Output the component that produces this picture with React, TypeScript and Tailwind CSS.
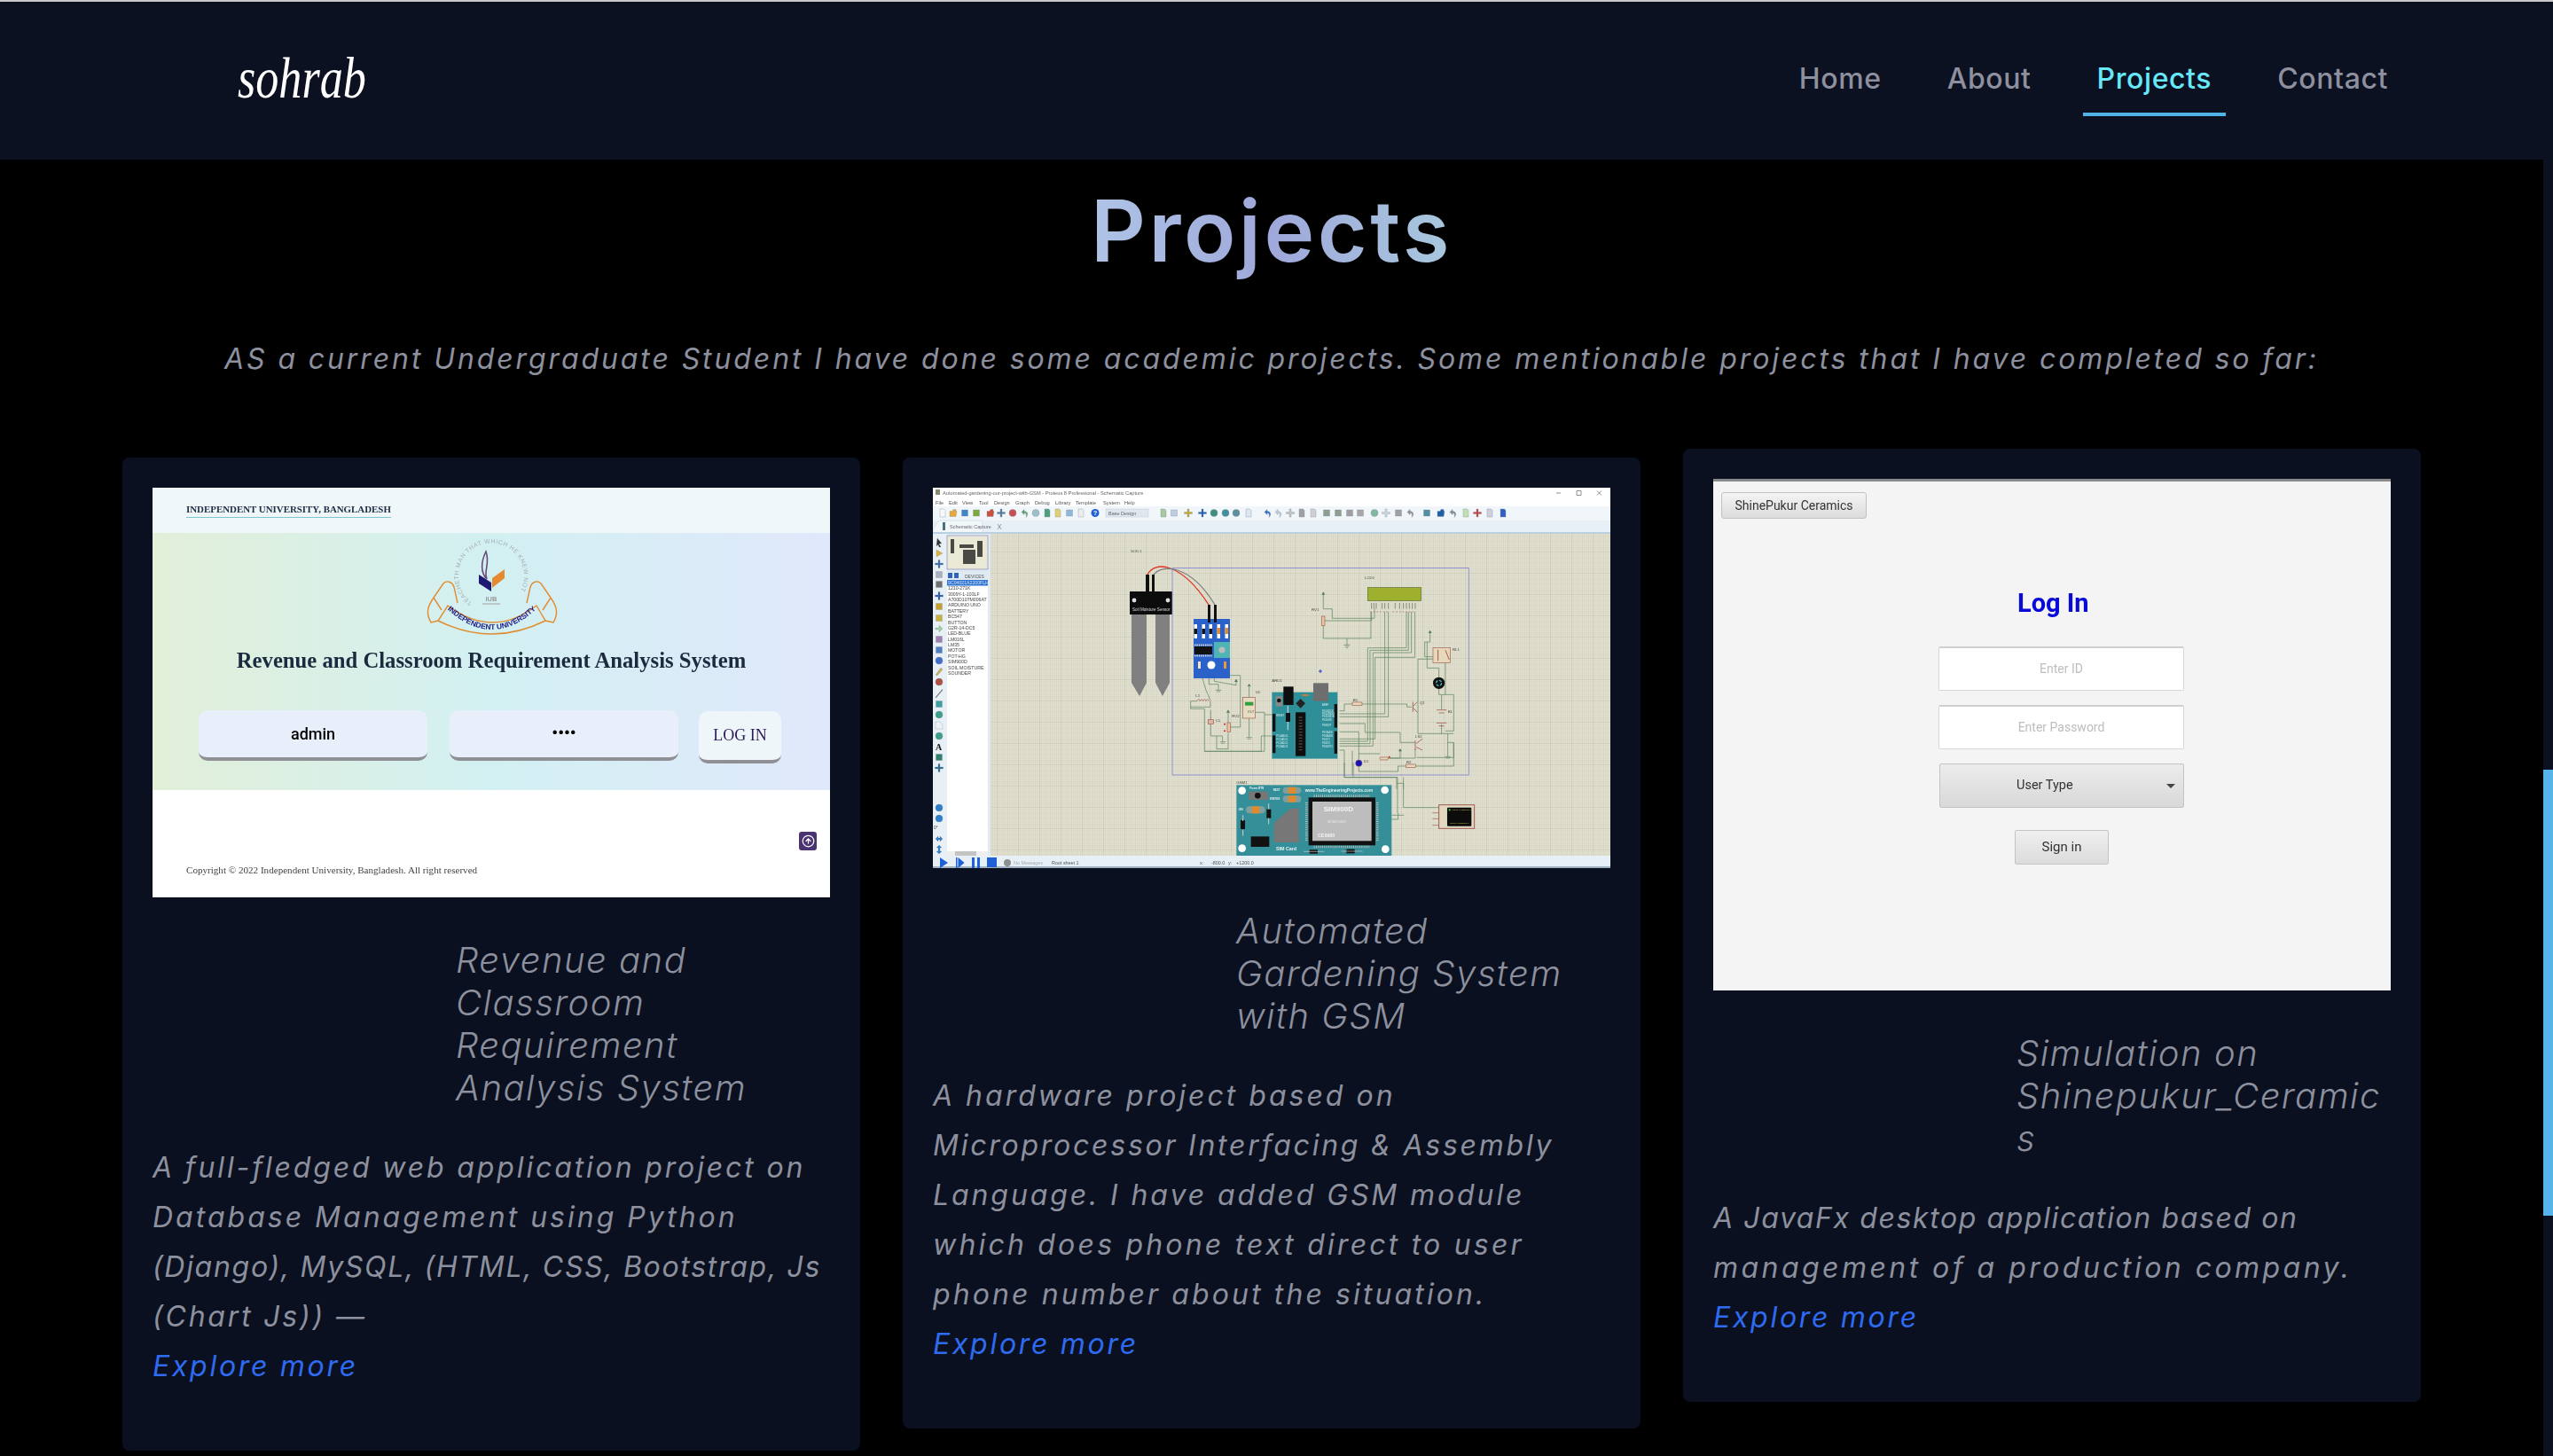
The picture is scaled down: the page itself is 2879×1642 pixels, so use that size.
import { CircleArrowUp } from "lucide-react";

const navItems = ["Home", "About", "Projects", "Contact"];

const wires = [
  "M577 240V290H607V322H750V290",
  "M582 330H740V300",
  "M577 347V390H738V300",
  "M657 390V412",
  "M785 300V645H632",
  "M797 300V655H632",
  "M858 300V422H727V738H632",
  "M865 300V430H735V746H632",
  "M875 300V438H745V754H632",
  "M887 300V454H752V730H632",
  "M938 372V402H920V452H948",
  "M928 402V490H968V522",
  "M897 460H948M897 460V712H1018",
  "M990 470V580",
  "M968 560V580H1018V703H990",
  "M632 635H648V612H678",
  "M704 612H860V622H876",
  "M977 580V630M977 680V712",
  "M632 678H718V708H837V742H888",
  "M888 765V795H775",
  "M998 712V790",
  "M893 793H1018V742H998",
  "M697 780H768M800 795H837V770",
  "M697 825V840H830V822H855",
  "M890 822H1018V742",
  "M632 706H697V800",
  "M632 768H648V860H825V900",
  "M675 770V852M848 860V900",
  "M326 555V590M326 660V725",
  "M347 640H378V772H175V628H128V602H150",
  "M195 602V622H128",
  "M196 632V665M196 680V720H236V740",
  "M216 720V764H255V710",
  "M175 772H367V720H405",
  "M378 648H405",
  "M255 640V675M262 690H296V515H262",
  "M168 525L180 565L195 600",
  "M190 525V545H222V565",
  "M208 525V535L282 548V530",
];

const labels: [string, number, number][] = [
  ["LCD1", 717, 188],
  ["RV1", 537, 296],
  ["RL1", 1014, 432],
  ["ARD1", 403, 538],
  ["Q1", 903, 612],
  ["B1", 998, 642],
  ["LS1", 888, 727],
  ["D1", 714, 810],
  ["R2", 858, 814],
  ["R1", 677, 602],
  ["U1", 347, 577],
  ["RV2", 268, 658],
  ["C1", 212, 673],
  ["L1", 145, 587],
  ["GSM1", 283, 881],
];

const deviceList = [
  "9C04021A2200FLH",
  "1210-271K",
  "3009Y-1-103LF",
  "A700D107M006AT",
  "ARDUINO UNO",
  "BATTERY",
  "BC547",
  "BUTTON",
  "G2R-14-DC5",
  "LED-BLUE",
  "LM016L",
  "LM35",
  "MOTOR",
  "POT-HG",
  "SIM900D",
  "SOIL MOISTURE",
  "SOUNDER",
];

const menuItems: [string, number][] = [
  ["File", 3],
  ["Edit", 18],
  ["View", 33],
  ["Tool", 52],
  ["Design", 69],
  ["Graph", 93],
  ["Debug", 115],
  ["Library", 138],
  ["Template", 161],
  ["System", 192],
  ["Help", 216],
];

// toolbar icons: x, colour, path around the icon centre
const doc = "M-3 -4.5H1.5L3 -3V4.5H-3Z";
const box = "M-3.5 -3.5H3.5V3.5H-3.5Z";
const plus = "M-1 -4.5H1V-1H4.5V1H1V4.5H-1V1H-4.5V-1H-1Z";
const disc = "M0 -4A4 4 0 1 1 0 4A4 4 0 1 1 0 -4Z";
const folder = "M-4 -2H-1L0 -4H3V-2H4L3 4H-4Z";
const undo = "M-3 -1L0 -4V-2C4 -2 5 2 2 5C3 2 2 0 0 0V2Z";
const toolIcons: [number, string, string][] = [
  [11, "#f8f8f8", doc], [23, "#e8a838", folder], [36, "#3f86c8", box], [49, "#7da83c", box],
  [65, "#c8503c", folder], [77, "#4f7f9f", plus], [90, "#c85050", disc], [103, "#5f9f6f", undo],
  [116, "#9fc0c8", disc], [129, "#4f9f7f", doc], [141, "#e0d070", doc], [154, "#8fb8dc", box],
  [167, "#ececec", doc], [260, "#a8c8a0", doc], [272, "#c0cce0", box],
  [288, "#c8a830", plus], [304, "#1f5fb8", plus], [317, "#3f8f7f", disc], [330, "#3f8f9f", disc],
  [342, "#5f8f9f", disc], [356, "#dce6f0", doc], [377, "#2f6fc8", undo], [389, "#c0ccd4", undo],
  [403, "#c4c4c4", plus], [416, "#a0a0a0", doc], [429, "#d0d0d0", doc], [444, "#8f9f8f", box],
  [457, "#8f9f8f", box], [470, "#9f9f9f", box], [482, "#a8a8a8", box], [498, "#7fb89f", disc],
  [511, "#d0d8e0", plus], [525, "#a0a0a0", box], [538, "#909090", undo], [557, "#4f8fa0", box],
  [573, "#1f5fa8", folder], [586, "#808890", undo], [601, "#bfe0af", doc], [614, "#c84040", plus],
  [628, "#d0d0d8", doc], [643, "#3060c0", doc],
];

const sideIcons: [number, string, string][] = [
  [62, "#303030", "M-2 -5L3 1H0L2 5H0L-1 2L-3 4Z"],
  [74, "#d8b040", "M-3 -4L4 0L-3 4Z"],
  [86, "#3f6fa8", plus],
  [98, "#a8b0c0", box],
  [109, "#707070", box],
  [122, "#2f5fb8", plus],
  [134, "#c8a030", box],
  [147, "#c8b040", box],
  [159, "#9fd09f", "M-4 -1H0V-4L4 0L0 4V1H-4Z"],
  [171, "#9f7fb0", box],
  [183, "#4f7fc0", box],
  [195, "#3f6fc8", disc],
  [207, "#c8b060", "M-4 4L2 -4L4 -2L-2 5Z"],
  [219, "#b05040", disc],
  [232, "#404040", "M-4 4.5L3.5 -4.5L4 -4L-3.5 5Z"],
  [244, "#3f9f9f", box],
  [256, "#3f9f8f", disc],
  [268, "#eef2f4", "M-4 -4H1C4 -2 4 2 4 4H-4Z"],
  [280, "#3f9f8f", disc],
  [304, "#2f7f6f", box],
  [316, "#2f6f8f", plus],
  [361, "#2f7fc8", disc],
  [373, "#2f7fc8", disc],
  [396, "#2f7fc8", "M-4 0L-1 -3V-1H1V-3L4 0L1 3V1H-1V3Z"],
  [408, "#2f7fc8", "M0 -5L3 -2H1V2H3L0 5L-3 2H-1V-2H-3Z"],
];

function IndependentLogo() {
  return (
    <svg viewBox="0 0 150 112" className="w-[150px] h-[112px]">
      <defs>
        <path id="iub-ring" d="M52.4 73.7A37 37 0 1 1 95.6 73.7" fill="none" />
        <path id="iub-band" d="M17 74Q75 134 132 74" fill="none" />
      </defs>
      <text fontFamily="Liberation Sans" fontSize="6.8" fill="#a9adb3" letterSpacing="0.6">
        <textPath href="#iub-ring">TEACHETH MAN THAT WHICH HE KNEW NOT</textPath>
      </text>
      <path d="M68 16C62 28 62 40 69 47C65 38 73 30 68 16Z" fill="none" stroke="#6b4a78" strokeWidth="1.6" />
      <path d="M60 42L74 51V61L60 52Z" fill="#1c1a72" />
      <path d="M89 36L75 46V57L89 46Z" fill="#e48b32" />
      <text x="74" y="72" textAnchor="middle" fontFamily="Liberation Sans" fontWeight="700" fontSize="7.5" fill="#999">
        IUB
      </text>
      <path d="M64 75H84" stroke="#aaa" strokeWidth="1.2" />
      <g fill="none" stroke="#e08c30" strokeWidth="1.4">
        <path d="M25 77Q75 115 125 77L135 94Q75 124 14 94Z" />
        <path d="M9 68L20 52C24 48 30 50 32 56L36 74M14 94L6 96C0 86 2 78 9 68L18 82" />
        <path d="M141 68L130 52C126 48 120 50 118 56L114 74M135 94L144 96C150 86 148 78 141 68L132 82" />
      </g>
      <text fontFamily="Liberation Sans" fontSize="8.4" fontWeight="700" fill="#1c1a8a">
        <textPath href="#iub-band" startOffset="50%" textAnchor="middle">
          INDEPENDENT UNIVERSITY
        </textPath>
      </text>
    </svg>
  );
}

function IubLogin() {
  return (
    <div className="h-[462px] bg-white flex flex-col font-['Liberation_Serif',serif] blur-[0.3px]">
      <div className="h-[51px] bg-[#eff7f9] pl-[38px] pt-[17px]">
        <div className="w-fit border-b-[1.5px] border-[#7cc7cf] pb-[2px] text-[10.9px] leading-[14px] font-bold text-[#1d2b45]">
          INDEPENDENT UNIVERSITY, BANGLADESH
        </div>
      </div>
      <div className="h-[290px] bg-linear-to-r from-[#e2efd9] via-[#d2f0f2] to-[#e0e8fb] flex flex-col items-center">
        <div className="mt-[5px] ml-[1px] h-[112px]">
          <IndependentLogo />
        </div>
        <div className="mt-[12px] text-[24.7px] leading-[30px] font-bold text-[#1b2a3e]">
          Revenue and Classroom Requirement Analysis System
        </div>
        <div className="mt-[41px] self-start ml-[52px] flex items-start">
          <div className="w-[258px] h-[57px] rounded-[10px] bg-[#e8effb] border-b-4 border-[#8f8f96] flex items-center justify-center font-['Roboto',sans-serif] font-medium text-[18px] text-black">
            admin
          </div>
          <div className="ml-[25px] w-[258px] h-[57px] rounded-[10px] bg-[#e8effb] border-b-4 border-[#8f8f96] flex items-center justify-center font-['Roboto',sans-serif] font-bold text-[19px] text-black">
            ••••
          </div>
          <div className="ml-[23px] mt-px w-[93px] h-[59px] rounded-[10px] bg-[#eff6fa] border-b-4 border-[#8f8f96] flex items-center justify-center text-[18px] text-[#2a1a5a]">
            LOG IN
          </div>
        </div>
      </div>
      <div className="flex justify-end pt-[47px] pr-[15px]">
        <div className="w-5 h-[21px] rounded-[3px] bg-[#4a3470] flex items-center justify-center">
          <CircleArrowUp size={15} className="text-white" />
        </div>
      </div>
      <div className="mt-[15px] pl-[38px] text-[11.1px] leading-[14px] text-[#444]">
        Copyright © 2022 Independent University, Bangladesh. All right reserved
      </div>
    </div>
  );
}

function ProteusCapture() {
  return (
    <svg viewBox="0 0 764 429" className="block w-[764px] h-[429px] blur-[0.35px]" fontFamily="Liberation Sans">
      <defs>
        <pattern id="sheet-grid" width="2.4" height="2.4" patternUnits="userSpaceOnUse">
          <rect width="2.4" height="2.4" fill="#e3e2d2" />
          <path d="M0 0H2.4M0 0V2.4" stroke="#c4c4ae" strokeWidth="0.5" />
        </pattern>
        <pattern id="sheet-major" width="24" height="24" patternUnits="userSpaceOnUse">
          <path d="M0 0H24M0 0V24" stroke="#b9b9a4" strokeWidth="0.5" />
        </pattern>
        <clipPath id="device-clip">
          <rect x="16" y="104" width="46" height="312" />
        </clipPath>
      </defs>
      <rect width="764" height="429" fill="#fff" />
      <text x="11" y="8" fontSize="5.7" fill="#666">
        Automated-gardening-our-project-with-GSM - Proteus 8 Professional - Schematic Capture
      </text>
      <path d="M3 2h5v6H3z" fill="#8a8a70" />
      <path d="M703 6H708M726 3.5h5v5h-5zM749 3.5l5 5M754 3.5l-5 5" stroke="#777" strokeWidth="0.8" fill="none" />
      {menuItems.map(([name, x]) => (
        <text key={name} x={x} y="19" fontSize="5.7" fill="#555">
          {name}
        </text>
      ))}
      <rect y="21" width="764" height="16" fill="#f0f6fa" />
      {toolIcons.map(([x, color, d]) => (
        <path key={x} d={d} transform={`translate(${x} 28.5)`} fill={color} stroke="#7f8f9f" strokeWidth="0.35" />
      ))}
      <circle cx="183" cy="28.5" r="4.5" fill="#1f5fd8" />
      <text x="181" y="31" fontSize="7" fontWeight="700" fill="#fff">
        ?
      </text>
      <rect x="195" y="24" width="48" height="9" fill="#dfe6ee" stroke="#b8c4d0" strokeWidth="0.4" />
      <text x="198" y="31" fontSize="5.5" fill="#666">
        Base Design
      </text>
      <rect y="37" width="764" height="14" fill="#e6f0f6" />
      <path d="M0 51V47L7 37H56V51" fill="#f2f7fa" stroke="#c0d0dc" strokeWidth="0.5" />
      <rect x="11" y="39" width="3" height="9" fill="#4f6f7f" />
      <text x="19" y="46" fontSize="5.5" fill="#667">
        Schematic Capture
      </text>
      <path d="M76 41l4 6M80 41l-4 6" transform="translate(-3 0)" stroke="#666" strokeWidth="0.6" />
      <rect y="50" width="764" height="2" fill="#b8d0e0" />
      <rect y="52" width="16" height="364" fill="#e8f0f6" />
      {sideIcons.map(([y, color, d]) => (
        <path key={y} d={d} transform={`translate(7 ${y})`} fill={color} stroke="#6f7f8f" strokeWidth="0.25" />
      ))}
      <text x="3" y="296" fontSize="10" fontWeight="700" fill="#111" fontFamily="Liberation Serif">
        A
      </text>
      <text x="1" y="385" fontSize="5" fill="#444">
        0°
      </text>
      <rect x="16" y="52" width="49" height="364" fill="#dfeaf2" />
      <rect x="16" y="54" width="46" height="38" fill="#e9e9d6" stroke="#8a8ac0" strokeWidth="0.7" />
      <path d="M20 58H24V74H20ZM34 70H48V86H34ZM50 60H56V78H50ZM30 64H46V68H30Z" fill="#4a4a44" />
      <text x="36" y="102" fontSize="5" fill="#555">
        DEVICES
      </text>
      <rect x="17" y="96" width="5" height="6" fill="#2f62b8" />
      <rect x="24" y="96" width="5" height="6" fill="#2f62b8" />
      <rect x="16" y="104" width="46" height="312" fill="#fff" />
      <rect x="16" y="104" width="46" height="6.5" fill="#2f74d0" />
      <g clipPath="url(#device-clip)">
        {deviceList.map((name, i) => (
          <text key={name} x="17" y={109 + i * 6.37} fontSize="5.2" fill={i === 0 ? "#cfe0f8" : "#444"}>
            {name}
          </text>
        ))}
      </g>
      <rect x="16" y="410" width="46" height="6" fill="#eee" />
      <rect x="25" y="410" width="24" height="6" fill="#c4c4c4" />
      <rect x="65" y="52" width="699" height="363" fill="url(#sheet-grid)" />
      <rect x="65" y="52" width="699" height="363" fill="url(#sheet-major)" />

      {/* soil sensor */}
      <path d="M242 98C250 82 280 84 311 132" fill="none" stroke="#e03020" strokeWidth="1.3" />
      <path d="M249 98C258 86 290 86 318 132" fill="none" stroke="#808080" strokeWidth="1.3" />
      <rect x="240" y="98" width="4" height="19" fill="#111" />
      <rect x="247" y="98" width="3" height="19" fill="#111" />
      <path d="M224 143H241V220L233 235L224 220Z" fill="#808080" />
      <path d="M251 143H267V220L259 235L251 220Z" fill="#808080" />
      <rect x="222" y="117" width="48" height="26" fill="#0c0c0c" />
      <circle cx="227" cy="127" r="2.4" fill="#ddd" />
      <circle cx="265" cy="127" r="2.4" fill="#ddd" />
      <text x="225" y="139" fontSize="4.6" fill="#ddd">
        Soil Moisture Sensor
      </text>
      <text x="223" y="73" fontSize="4.4" fill="#555">
        SOIL1
      </text>

      {/* moisture module */}
      <rect x="294" y="148" width="41" height="67" fill="#2a62c9" />
      <rect x="310" y="132" width="3" height="20" fill="#111" />
      <rect x="317" y="132" width="3" height="20" fill="#111" />
      {[296, 305, 313].map((x) => (
        <g key={x}>
          <rect x={x - 1.5} y="154" width="3.5" height="16" fill="#fff" />
          <rect x={x - 1.5} y="159" width="3.5" height="6" fill="#111" />
        </g>
      ))}
      {[322, 331].map((x) => (
        <g key={x}>
          <rect x={x - 1.5} y="154" width="3.5" height="16" fill="#fff" />
          <rect x={x - 1.5} y="158" width="3.5" height="7" fill="#e08a30" />
        </g>
      ))}
      <rect x="295" y="179" width="20" height="9" fill="#111" />
      <path d="M295 177.5H315M295 189.5H315" stroke="#ddd" strokeWidth="2" strokeDasharray="1.4 1" />
      <rect x="317" y="174" width="18" height="18" fill="#4fb4b4" />
      <circle cx="326" cy="183" r="3.6" fill="#bbb" />
      <circle cx="314" cy="200" r="4.5" fill="#fff" />
      <rect x="299" y="196" width="3" height="8" fill="#f4e0c8" />
      <rect x="328" y="196" width="3" height="8" fill="#e89a40" />

      {/* schematic, drawn in 3x sheet units */}
      <g transform="translate(248 40) scale(0.3333)">
        <rect x="66" y="152" width="1003" height="700" fill="none" stroke="#7f7fd6" strokeWidth="2.4" />
        <g fill="none" stroke="#5f8560" strokeWidth="2.2">
          {wires.map((d) => (
            <path key={d} d={d} />
          ))}
        </g>
        <rect x="727" y="218" width="181" height="45" fill="#9eb02e" stroke="#5f6a3a" strokeWidth="2" />
        <path d="M740 270V290M748 270V290M756 270V290M776 270V290M785 270V290M797 270V290M820 270V290M835 270V290M848 270V290M858 270V290M868 270V290M878 270V290M888 270V290" stroke="#8a8a78" strokeWidth="3" />
        <path d="M735 300H800M812 300H890" stroke="#a05a50" strokeWidth="2" strokeDasharray="5 6" />
        <rect x="572" y="315" width="10" height="32" fill="#e8c8a4" stroke="#a05a50" strokeWidth="2" />
        <path d="M577 232l-6 10h12zM938 362l-6 10h12zM326 543l-6 10h12zM255 631l-6 10h12zM282 527l-6 10h12zM837 762l-6 10h12z" fill="#4f7f50" />
        <path d="M646 412h22M650 417h14M654 422h6M988 790h20M992 795h12M227 740h20M231 745h12M316 725h20M320 730h12M212 565h20M216 570h12" stroke="#5f8560" strokeWidth="2" />
        <rect x="948" y="422" width="59" height="50" fill="#e6d8b8" stroke="#a05a50" strokeWidth="2" />
        <path d="M965 428V466M990 430L1003 462" stroke="#a05a50" strokeWidth="3" />
        <circle cx="968" cy="541" r="20" fill="#111" />
        <circle cx="968" cy="541" r="9" fill="none" stroke="#4fc0d0" strokeWidth="4" strokeDasharray="9 5" />
        <path d="M880 605V638M882 618L895 605M882 626L895 640" stroke="#a05a50" strokeWidth="2.6" fill="none" />
        <path d="M960 632H994M968 642H986M960 676H994M968 686H986" stroke="#a05a50" strokeWidth="2.4" />
        <path d="M888 735V768M892 745L912 730M892 758L912 768" stroke="#a05a50" strokeWidth="2.6" fill="none" />
        <circle cx="697" cy="812" r="11" fill="#1212b8" stroke="#a05a50" strokeWidth="1.5" />
        <rect x="768" y="792" width="28" height="9" rx="3" fill="#e6d8b8" stroke="#a05a50" strokeWidth="2" />
        <circle cx="800" cy="791" r="3" fill="#c02020" />
        <rect x="857" y="816" width="33" height="11" fill="#e6d8b8" stroke="#a05a50" strokeWidth="2" />
        <rect x="675" y="606" width="33" height="11" fill="#e6d8b8" stroke="#a05a50" strokeWidth="2" />
        <rect x="403" y="572" width="222" height="225" fill="#2f8f99" stroke="#8fb8b8" strokeWidth="1" />
        <rect x="442" y="553" width="34" height="62" fill="#0e0e0e" />
        <rect x="543" y="541" width="51" height="61" fill="#6e6e6e" />
        <path d="M500 594L516 610L500 626L484 610Z" fill="#222" />
        <rect x="416" y="585" width="22" height="35" fill="#888" />
        <circle cx="427" cy="600" r="7" fill="#111" />
        <rect x="483" y="640" width="34" height="148" fill="#0e0e0e" />
        <path d="M500 655V775" stroke="#444" strokeWidth="12" strokeDasharray="4 6" />
        <rect x="450" y="642" width="15" height="30" fill="#111" />
        <path d="M457 618V642M457 672V700" stroke="#ddd" strokeWidth="3" />
        <rect x="505" y="579" width="22" height="6" fill="#c08040" />
        <rect x="405" y="645" width="10" height="60" fill="#111" />
        <rect x="405" y="718" width="10" height="60" fill="#111" />
        <rect x="614" y="612" width="10" height="80" fill="#111" />
        <rect x="614" y="704" width="10" height="76" fill="#111" />
        <g fill="#d8f0f0" fontSize="8">
          <text x="573" y="617">AREF</text>
          <text x="573" y="638">PD13/SCK</text>
          <text x="573" y="648">PD12/MISO</text>
          <text x="573" y="658">PD11/MOSI</text>
          <text x="573" y="668">PD10/SS</text>
          <text x="573" y="688">PD8/ICP</text>
          <text x="573" y="710">PD7/AIN1</text>
          <text x="573" y="722">PD6/AIN0</text>
          <text x="573" y="734">PD5/T1</text>
          <text x="573" y="746">PD4/T0</text>
          <text x="573" y="758">PD3/INT1</text>
          <text x="418" y="653">RESET</text>
          <text x="418" y="724">PC0/ADC0</text>
          <text x="418" y="736">PC1/ADC1</text>
          <text x="418" y="748">PC2/ADC2</text>
          <text x="418" y="760">PC3/ADC3</text>
        </g>
        <rect x="305" y="590" width="42" height="70" fill="#e6dcc0" stroke="#a05a50" strokeWidth="2" />
        <rect x="312" y="605" width="28" height="12" fill="#2f9f3f" />
        <text x="320" y="643" fontSize="8" fill="#555">VOUT</text>
        <rect x="187" y="665" width="18" height="15" fill="#d8b8a0" stroke="#a05a50" strokeWidth="2" />
        <rect x="252" y="675" width="10" height="32" fill="#e8c8a4" stroke="#a05a50" strokeWidth="2" />
        <path d="M150 602q5 -12 10 0q5 -12 10 0q5 -12 10 0q5 -12 10 0" fill="none" stroke="#a05a50" strokeWidth="2" />
        <circle cx="243" cy="680" r="3" fill="#c02020" />
        <circle cx="243" cy="703" r="3" fill="#c02020" />
        <path d="M561 501h12M567 495v12" stroke="#3040c0" strokeWidth="3" />
        <g fill="#444" fontSize="13">
          {labels.map(([text, x, y]) => (
            <text key={text} x={x} y={y}>
              {text}
            </text>
          ))}
        </g>
      </g>

      {/* GSM board and terminal */}
      <g transform="translate(328 310) scale(0.3333)">
        <g fill="none" stroke="#5f8560" strokeWidth="2.2">
          <path d="M408 0V50H588V170M438 0V50M585 70H608V152H728M568 178H610M568 192H590V170" />
        </g>
        <rect x="43" y="76" width="525" height="239" fill="#358f98" />
        <g fill="#fff">
          <circle cx="62" cy="95" r="13" />
          <circle cx="545" cy="93" r="13" />
          <circle cx="62" cy="290" r="13" />
          <circle cx="547" cy="293" r="13" />
        </g>
        <rect x="85" y="98" width="65" height="28" fill="#777" />
        <circle cx="115" cy="112" r="10" fill="#111" />
        <rect x="200" y="83" width="62" height="22" rx="11" fill="#7f9f9f" />
        <rect x="218" y="83" width="26" height="22" fill="#e08a30" />
        <rect x="200" y="112" width="62" height="22" rx="11" fill="#7f9f9f" />
        <rect x="218" y="112" width="26" height="22" fill="#e08a30" />
        <rect x="75" y="148" width="65" height="24" rx="12" fill="#7f9f9f" />
        <rect x="95" y="148" width="26" height="24" fill="#e08a30" />
        <g fill="#e8f4f4" fontWeight="700">
          <text x="88" y="90" fontSize="9">Power BTN</text>
          <text x="167" y="96" fontSize="9">NEXT</text>
          <text x="155" y="127" fontSize="9">STATUS</text>
          <text x="50" y="162" fontSize="10">ON</text>
          <text x="275" y="98" fontSize="14">www.TheEngineeringProjects.com</text>
          <text x="177" y="296" fontSize="16">SIM Card</text>
        </g>
        <rect x="145" y="158" width="15" height="30" fill="#111" />
        <rect x="57" y="195" width="15" height="30" fill="#111" />
        <path d="M152 138V212M65 178V250" stroke="#ccc" strokeWidth="3" strokeDasharray="20 30" />
        <path d="M170 205L225 155H255V270H170Z" fill="#777" />
        <rect x="92" y="250" width="62" height="35" fill="#111" />
        <rect x="287" y="118" width="226" height="162" fill="#111" />
        <path d="M305 113H495M305 285H495M280 135V265M520 135V265" stroke="#bbb" strokeWidth="8" strokeDasharray="3 4" />
        <rect x="300" y="132" width="200" height="133" fill="#bdbdbd" />
        <text x="338" y="165" fontSize="24" fontWeight="700" fill="#f4f4f4">SIM900D</text>
        <text x="352" y="203" fontSize="8" fill="#eee">M1 SS471 09072</text>
        <text x="318" y="251" fontSize="16" fontWeight="700" fill="#f4f4f4">CE0980</text>
        <rect x="290" y="295" width="28" height="13" fill="#111" />
        <rect x="415" y="293" width="28" height="14" fill="#111" />
        <path d="M270 301H340M398 300H470" stroke="#ccc" strokeWidth="2" />
        <rect x="728" y="143" width="120" height="80" fill="#e0d8c0" stroke="#a05a50" strokeWidth="3" />
        <rect x="756" y="152" width="82" height="63" rx="3" fill="#0c0c0c" />
        <rect x="761" y="157" width="6" height="6" fill="#40c040" />
        <path d="M706 170H728M706 190H728M706 212H728" stroke="#a05a50" strokeWidth="2" />
        <text x="772" y="163" fontSize="7" fill="#c8c840">VIRTUAL TERMINAL</text>
        <text x="764" y="208" fontSize="7" fill="#c8c840">VIRTUAL TERMINAL</text>
      </g>

      <rect y="415" width="764" height="14" fill="#e6f0f6" />
      <rect y="427" width="764" height="2" fill="#9fb0c0" />
      <path d="M8 417l9 6l-9 6zM26 417v12h1.5v-12zM28.5 417l7 6l-7 6z" fill="#1f5fd8" />
      <path d="M44 417h3v12h-3zM50 417h3v12h-3zM61 417h11v11h-11z" fill="#1f5fd8" />
      <circle cx="84" cy="423" r="4" fill="#8f8f8f" />
      <text x="91" y="425" fontSize="5.4" fill="#aaa">No Messages</text>
      <text x="134" y="425" fontSize="5.4" fill="#555">Root sheet 1</text>
      <text x="301" y="425" fontSize="5.4" fill="#555">x:</text>
      <text x="314" y="425" fontSize="5.4" fill="#555">-800.0</text>
      <text x="333" y="425" fontSize="5.4" fill="#555">y:</text>
      <text x="342" y="425" fontSize="5.4" fill="#555">+1200.0</text>
    </svg>
  );
}

function CeramicsLogin() {
  return (
    <div className="h-[577px] bg-[#f4f4f4] border-t-[3px] border-[#8a8a8a] font-['Roboto',sans-serif] blur-[0.2px]">
      <div className="ml-[9px] mt-3 w-[164px] h-[30px] rounded-[3px] border border-[#c2c2c2] bg-linear-to-b from-[#f4f4f4] to-[#dcdcdc] flex items-center justify-center text-[14px] text-[#333]">
        ShinePukur Ceramics
      </div>
      <div className="ml-[343px] mt-[77px] text-[29px] leading-[36px] font-bold text-[#0a0ad8]">Log In</div>
      <div className="ml-[254px] mt-[31px] w-[277px] flex flex-col">
        <div className="h-[50px] bg-white rounded-[2px] border border-[#d8d8d8] border-t-2 border-t-[#cfcfcf] flex items-center justify-center text-[14px] text-[#bdbdbd]">
          Enter ID
        </div>
        <div className="mt-4 h-[50px] bg-white rounded-[2px] border border-[#d8d8d8] border-t-2 border-t-[#cfcfcf] flex items-center justify-center text-[14px] text-[#bdbdbd]">
          Enter Password
        </div>
        <div className="mt-4 ml-px h-[50px] rounded-[2px] border border-[#c4c4c4] bg-linear-to-b from-[#ececec] to-[#d8d8d8] flex items-center text-[14.5px] text-[#333]">
          <span className="ml-[86px]">User Type</span>
          <span className="ml-[105px] w-0 h-0 border-x-[5px] border-x-transparent border-t-[5px] border-t-[#444]" />
        </div>
        <div className="mt-[25px] ml-[86px] w-[106px] h-[39px] rounded-[2px] border border-[#c4c4c4] bg-linear-to-b from-[#efefef] to-[#dcdcdc] flex items-center justify-center text-[15px] text-[#333]">
          Sign in
        </div>
      </div>
    </div>
  );
}

const projects = [
  {
    image: <IubLogin />,
    title: ["Revenue and", "Classroom", "Requirement", "Analysis System"],
    lines: [
      ["A full-fledged web application project on", "tracking-[2.85px]"],
      ["Database Management using Python", "tracking-[3px]"],
      ["(Django), MySQL, (HTML, CSS, Bootstrap, Js", "tracking-[1.7px]"],
      ["(Chart Js)) —", "tracking-[2.8px]"],
    ],
    offset: false,
  },
  {
    image: <ProteusCapture />,
    title: ["Automated", "Gardening System", "with GSM"],
    lines: [
      ["A hardware project based on", "tracking-[3px]"],
      ["Microprocessor Interfacing & Assembly", "tracking-[2.75px]"],
      ["Language. I have added GSM module", "tracking-[2.9px]"],
      ["which does phone text direct to user", "tracking-[3.2px]"],
      ["phone number about the situation.", "tracking-[3.1px]"],
    ],
    offset: false,
  },
  {
    image: <CeramicsLogin />,
    title: ["Simulation on", "Shinepukur_Ceramic", "s"],
    lines: [
      ["A JavaFx desktop application based on", "tracking-[1.6px]"],
      ["management of a production company.", "tracking-[3.45px]"],
    ],
    offset: true,
  },
];

export default function App() {
  return (
    <div className="w-[2879px] h-[1642px] overflow-hidden bg-black font-[Inter,sans-serif]">
      <div className="h-0.5 bg-[#c9c9c9]" />
      <div className="flex">
        <div className="w-[2868px]">
          <header className="h-[178px] bg-[#0b1120] flex items-start justify-between pl-[268px] pr-[159px]">
            <div className="mt-[51px] origin-left scale-x-[0.79] font-['Liberation_Serif',serif] italic text-[66px] leading-[70px] text-white">
              sohrab
            </div>
            <nav className="mt-[65px] flex gap-[42px]">
              {navItems.map((item) => (
                <a
                  key={item}
                  className={
                    item === "Projects"
                      ? "px-4 pb-4 border-b-4 border-[#4fb3e8] text-[32px] leading-[44px] tracking-[0.6px] font-medium text-[#67e8f9]"
                      : "px-4 pb-4 border-b-4 border-transparent text-[32px] leading-[44px] tracking-[0.6px] font-medium text-[#8e909f]"
                  }
                >
                  {item}
                </a>
              ))}
            </nav>
          </header>

          <main>
            <h1 className="mt-5 mx-auto w-fit text-[96px] leading-[120px] tracking-[3.5px] font-semibold bg-linear-to-r from-[#aec4e6] via-[#9fa8da] to-[#a8c8de] bg-clip-text text-transparent">
              Projects
            </h1>
            <p className="mt-[61px] text-center text-[32px] leading-[48px] italic tracking-[2.9px] text-[#8d909e]">
              AS a current Undergraduate Student I have done some academic projects. Some mentionable projects that I
              have completed so far:
            </p>

            <div className="mt-[87px] mx-[138px] grid grid-cols-3 gap-[48px] items-start">
              {projects.map((project) => (
                <article
                  key={project.title[0]}
                  className={
                    project.offset
                      ? "-translate-y-2.5 rounded-lg bg-[#0a101f] px-[34px] pt-[34px] pb-[67px]"
                      : "rounded-lg bg-[#0a101f] px-[34px] pt-[34px] pb-[67px]"
                  }
                >
                  {project.image}
                  <h3 className="mt-[47px] ml-[342px] text-[40px] leading-[48px] tracking-[1.5px] font-light italic text-[#8d909e]">
                    {project.title.map((line) => (
                      <div key={line}>{line}</div>
                    ))}
                  </h3>
                  <p className="mt-[38px] text-[32px] leading-[56px] italic text-[#8d909e] whitespace-nowrap">
                    {project.lines.map(([line, tracking]) => (
                      <span key={line} className={`block ${tracking}`}>
                        {line}
                      </span>
                    ))}
                    <a className="block tracking-[2.7px] text-[#2f6bf0]">Explore more</a>
                  </p>
                </article>
              ))}
            </div>
          </main>
        </div>

        <div className="w-[11px] h-[1640px] bg-[#0b1120] pt-[866px]">
          <div className="h-[503px] bg-[#56b4ea]" />
        </div>
      </div>
    </div>
  );
}
